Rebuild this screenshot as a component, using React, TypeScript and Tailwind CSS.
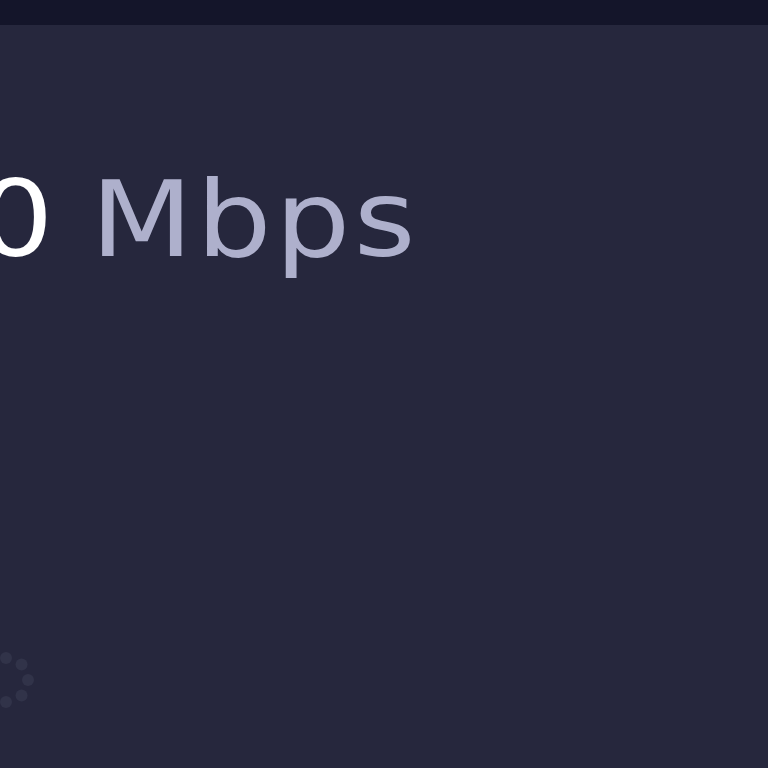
export default function App() {
  return (
    <div className="w-[768px] h-[768px] overflow-hidden bg-[#26273d] flex flex-col">
      <div className="h-[25px] bg-[#14152a] shrink-0" />
      <div className="flex-1 flex flex-col">
        <div className="mt-[142px] -ml-[22px] flex items-baseline gap-[30px] origin-left scale-x-[1.12] font-['DejaVu_Sans',sans-serif] text-[106px] leading-[1] tracking-[3px]">
          <span className="text-white font-normal">0</span>
          <span className="text-[#aeb0cc] font-normal">Mbps</span>
        </div>
        <div className="mt-auto mb-[58px] -ml-[24px]">
          <svg width="60" height="60" viewBox="0 0 60 60">
            {[0, 45, 90, 135, 180, 225, 270, 315].map((a) => {
              const r = (a * Math.PI) / 180;
              return (
                <circle
                  key={a}
                  cx={30 + Math.cos(r) * 22}
                  cy={30 + Math.sin(r) * 22}
                  r="6"
                  fill="#313349"
                />
              );
            })}
          </svg>
        </div>
      </div>
    </div>
  );
}
